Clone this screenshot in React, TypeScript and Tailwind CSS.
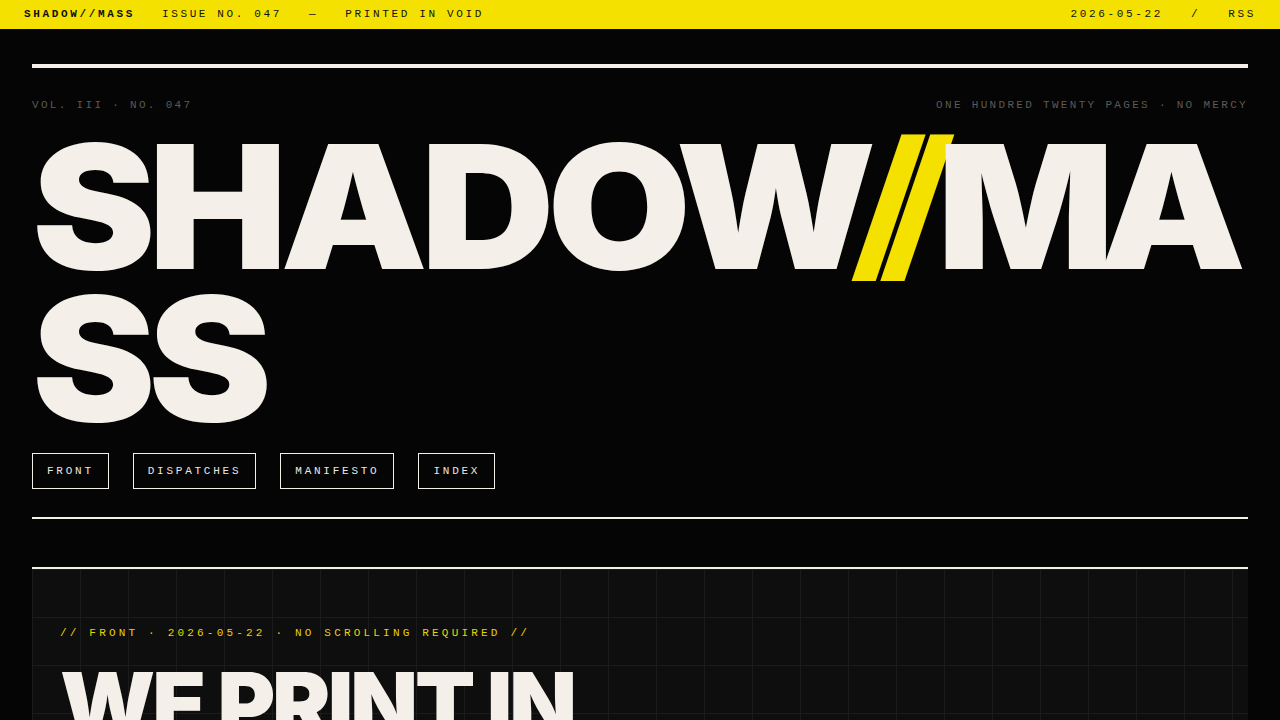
import React from 'react';

const mono = "font-['Liberation_Mono',monospace]";
const display = "font-['Inter','Liberation_Sans',sans-serif]";

const navItems = ['FRONT', 'DISPATCHES', 'MANIFESTO', 'INDEX'];

export default function App() {
  return (
    <div className="min-h-screen overflow-hidden bg-[#050505] text-[#f4f0e9]">
      {/* Masthead strip */}
      <div className={`${mono} flex h-[29px] items-center justify-between bg-[#f5e100] px-6 text-[11px] leading-none tracking-[0.24em] text-[#111]`}>
        <div className="flex items-center gap-[27px]">
          <span className="font-bold">SHADOW//MASS</span>
          <span>ISSUE NO. 047</span>
          <span>—</span>
          <span>PRINTED IN VOID</span>
        </div>
        <div className="flex items-center gap-7">
          <span>2026-05-22</span>
          <span>/</span>
          <span>RSS</span>
        </div>
      </div>

      <div className="px-8 pt-[35px]">
        {/* Header */}
        <header className="border-t-4 border-[#f4f0e9] pb-7">
          <div className={`${mono} mt-[29px] flex justify-between text-[11px] leading-4 tracking-[0.21em] text-[#5c5a56]`}>
            <span>VOL. III · NO. 047</span>
            <span>ONE HUNDRED TWENTY PAGES · NO MERCY</span>
          </div>

          <h1 className={`${display} mt-[15px] w-[1150px] origin-left scale-x-[1.08] break-all text-[172px] font-black leading-[152px] tracking-[-0.04em] text-[#f4f0e9]`}>
            SHADOW
            <span className="ml-[-0.07em] font-['Roboto',sans-serif] text-[190px] tracking-[-0.09em] text-[#f5e100]">//</span>
            <span className="tracking-[-0.085em]">M</span>A
            SS
          </h1>

          <nav className="mt-[19px] flex gap-6">
            {navItems.map(item => (
              <a
                key={item}
                href="#"
                className={`${mono} flex h-9 items-center border border-[#f4f0e9] px-3.5 text-[11px] tracking-[0.25em] text-[#ece8e1]`}
              >
                {item}
              </a>
            ))}
          </nav>
        </header>

        <div className="border-t-2 border-[#f4f0e9]" />

        {/* Front page hero */}
        <section className="mt-12 border-t-2 border-[#f4f0e9] bg-[#0e0e0e] bg-[linear-gradient(to_right,#1b1b1b_1px,transparent_1px),linear-gradient(to_bottom,#1b1b1b_1px,transparent_1px)] bg-[size:48px_48px] px-7 pb-16 pt-14">
          <p className={`${mono} text-[11px] leading-4 tracking-[0.29em] text-[#e8d400]`}>
            // FRONT · 2026-05-22 · NO SCROLLING REQUIRED //
          </p>
          <h2 className={`${display} mt-6 text-[88px] font-black leading-[0.9] tracking-[-0.035em] text-[#f4f0e9]`}>
            WE PRINT IN
            <br />
            THE DARK.
          </h2>
        </section>
      </div>
    </div>
  );
}
